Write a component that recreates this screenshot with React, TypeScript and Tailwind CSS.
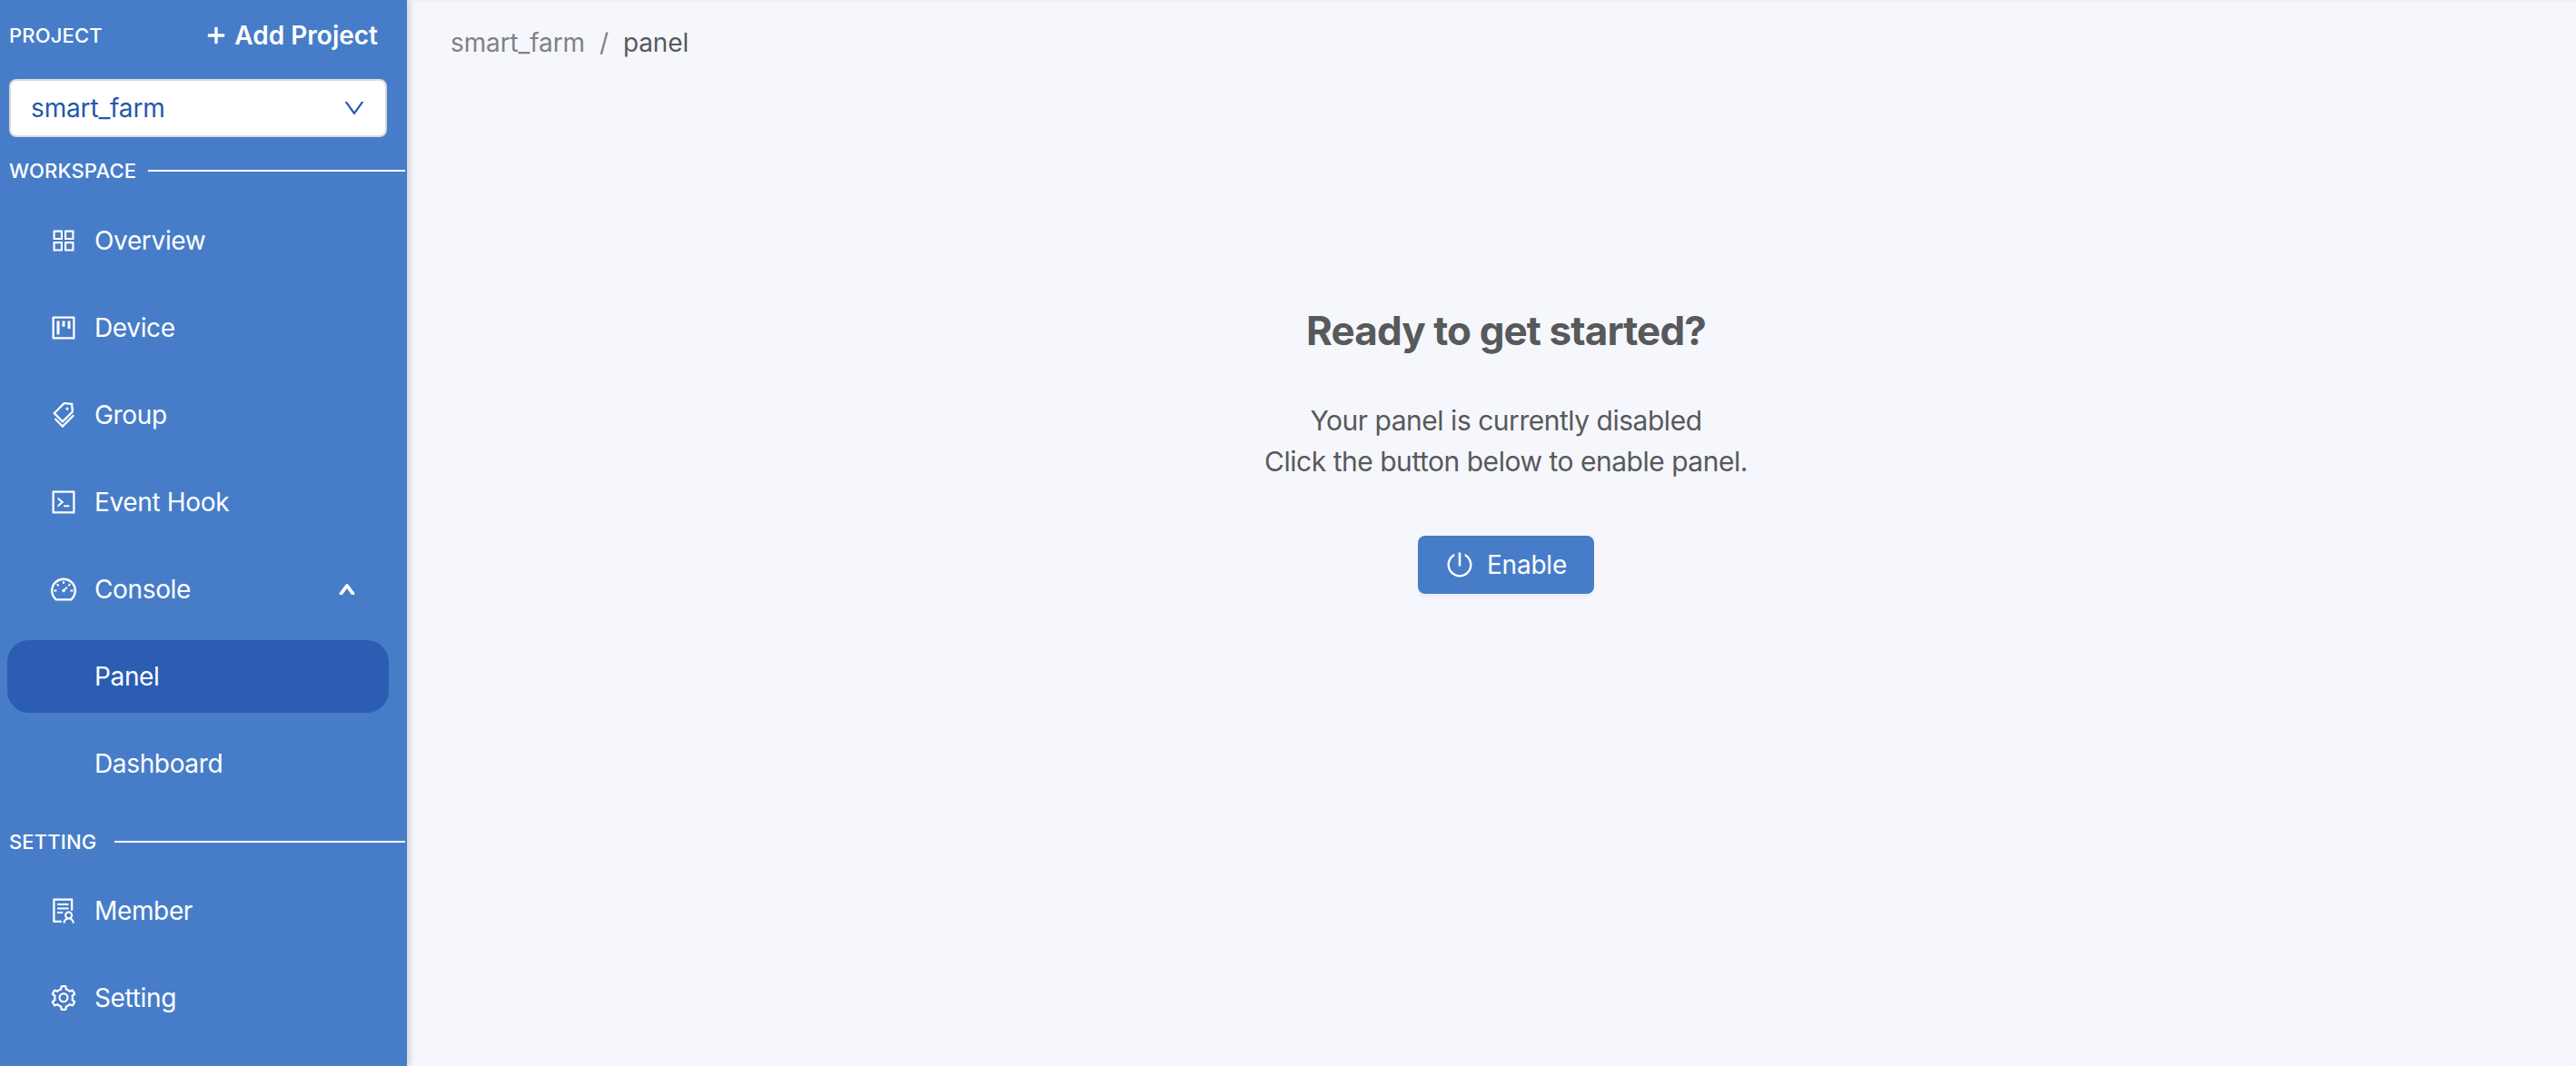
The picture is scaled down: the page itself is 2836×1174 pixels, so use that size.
import React from "react";
import {
  AiOutlineAppstore,
  AiOutlineProject,
  AiOutlineTags,
  AiOutlineCode,
  AiOutlineDashboard,
  AiOutlineSolution,
  AiOutlineSetting,
  AiOutlinePoweroff,
  AiOutlineUp,
  AiOutlineDown,
  AiOutlinePlus,
} from "react-icons/ai";

const Item = ({ icon, label, active, right }: { icon?: React.ReactNode; label: string; active?: boolean; right?: React.ReactNode }) => (
  <div className={`mx-2 mb-4 flex h-20 w-[420px] shrink-0 items-center rounded-3xl pl-[46px] pr-[36px] text-[28px] tracking-[-0.35px] text-white ${active ? "bg-[#2b5db2]" : ""}`}>
    <span className="flex w-8 shrink-0 justify-center text-[32px]">{icon}</span>
    <span className="ml-[18px] flex-1">{label}</span>
    {right}
  </div>
);

const Section = ({ label, gap }: { label: string; gap: string }) => (
  <div className="flex h-6 items-center pl-[10px] pr-[2px] text-[22px] font-medium tracking-[0.15px] text-white">
    <span>{label}</span>
    <span className={`h-[2px] flex-1 bg-white ${gap}`} />
  </div>
);

export default function App() {
  return (
    <div className="flex h-[1174px] w-[2836px] overflow-hidden bg-[#f5f7fc] font-['Inter',sans-serif]">
      <aside className="z-10 flex h-full w-[448px] shrink-0 flex-col bg-[#477dc8] shadow-[2px_0_8px_rgba(0,0,0,0.2)]">
        <div className="flex h-[87px] items-center justify-between pb-[10px] pl-[10px] pr-8 text-white">
          <span className="mt-[2px] text-[22px] font-medium tracking-[0.15px]">PROJECT</span>
          <span className="flex items-center gap-[8px] text-[28px] font-semibold">
            <AiOutlinePlus className="text-[24px]" strokeWidth={70} />
            Add Project
          </span>
        </div>
        <div className="ml-[10px] flex h-[64px] w-[416px] items-center justify-between rounded-lg border-2 border-[#d9d9d9] bg-white pl-[22px] pr-[20px] text-[28px] tracking-[-0.15px] text-[#2457ac]">
          <span>smart_farm</span>
          <AiOutlineDown className="text-[28px]" />
        </div>
        <div className="mt-[25px]"><Section label="WORKSPACE" gap="ml-[13px]" /></div>
        <div className="mt-[25px] flex flex-col">
          <Item icon={<AiOutlineAppstore />} label="Overview" />
          <Item icon={<AiOutlineProject />} label="Device" />
          <Item icon={<AiOutlineTags />} label="Group" />
          <Item icon={<AiOutlineCode />} label="Event Hook" />
          <Item icon={<AiOutlineDashboard />} label="Console" right={<AiOutlineUp className="text-[20px]" strokeWidth={110} />} />
          <Item label="Panel" active />
          <Item label="Dashboard" />
        </div>
        <div className="mt-[18px]"><Section label="SETTING" gap="ml-[20px]" /></div>
        <div className="mt-[24px] flex flex-col">
          <Item icon={<AiOutlineSolution />} label="Member" />
          <Item icon={<AiOutlineSetting />} label="Setting" />
        </div>
      </aside>
      <main className="flex h-full flex-1 flex-col shadow-[inset_0_2px_3px_rgba(0,0,0,0.03)]">
        <div className="flex items-center pl-[48px] pt-[30px] text-[28px] leading-[34px] tracking-[-0.12px]">
          <span className="text-[#808184]">smart_farm</span>
          <span className="mx-4 text-[#808184]">/</span>
          <span className="text-[#58595b]">panel</span>
        </div>
        <div className="ml-8 flex flex-col items-center pt-[267px]">
          <h1 className="text-[44px] font-bold leading-[66px] tracking-[-0.9px] text-[#58595b]">Ready to get started?</h1>
          <p className="mt-[44px] text-center text-[30px] leading-[45px] tracking-[-0.48px] text-[#58595b]">
            Your panel is currently disabled
            <br />
            Click the button below to enable panel.
          </p>
          <button className="mt-[59px] flex h-16 w-[194px] items-center justify-center gap-[14px] rounded-lg bg-[#477dc8] text-[28px] tracking-[-0.2px] text-white shadow-[0_4px_0_rgba(0,0,0,0.03)]">
            <AiOutlinePoweroff className="text-[32px]" />
            Enable
          </button>
        </div>
      </main>
    </div>
  );
}
